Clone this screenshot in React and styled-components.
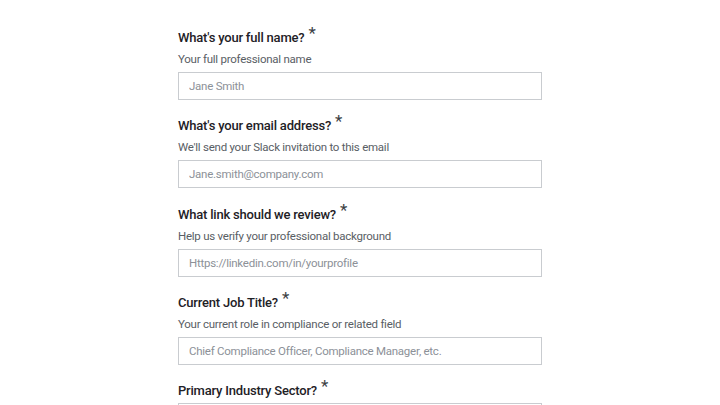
import React from 'react';
import styled, { createGlobalStyle } from 'styled-components';

const GlobalStyle = createGlobalStyle`
    html, body {
        margin: 0;
        padding: 0;
        background: #ffffff;
        font-family: Roboto, 'Noto Sans', sans-serif;
    }
`;

const Page = styled.div`
    width: 720px;
    height: 405px;
    overflow: hidden;
    padding: 28px 0 0 178px;
    box-sizing: border-box;
`;

const Form = styled.form`
    width: 364px;
    display: flex;
    flex-direction: column;
    gap: 16.3px;
`;

const Field = styled.div`
    display: flex;
    flex-direction: column;
`;

const Label = styled.label`
    font-size: 13px;
    line-height: 20px;
    font-weight: 500;
    color: #1e2126;
    letter-spacing: -0.2px;

    span {
        color: #3b3f45;
        font-size: 17px;
        font-weight: 400;
        margin-left: 4px;
        position: relative;
        top: -3px;
        line-height: 0;
    }
`;

const Hint = styled.p`
    margin: 1px 0 0;
    font-size: 11.5px;
    line-height: 20px;
    letter-spacing: -0.25px;
    color: #595e65;
`;

const Input = styled.input`
    margin-top: ${({ noHint }) => noHint ? '2px' : '3px'};
    height: 28px;
    box-sizing: border-box;
    border: 1px solid #c9ccd0;
    border-radius: 0;
    padding: 0 10px;
    font-family: inherit;
    font-size: 11.5px;
    letter-spacing: -0.25px;
    color: #1f2329;
    outline: none;

    &::placeholder {
        color: #8c9198;
    }
`;

const fields = [
    { label: "What's your full name?", hint: 'Your full professional name', placeholder: 'Jane Smith' },
    { label: "What's your email address?", hint: "We'll send your Slack invitation to this email", placeholder: 'Jane.smith@company.com' },
    { label: 'What link should we review?', hint: 'Help us verify your professional background', placeholder: 'Https://linkedin.com/in/yourprofile' },
    { label: 'Current Job Title?', hint: 'Your current role in compliance or related field', placeholder: 'Chief Compliance Officer, Compliance Manager, etc.' },
    { label: 'Primary Industry Sector?', hint: null, placeholder: '' },
];

const App = () => (
    <>
        <GlobalStyle />
        <Page>
            <Form>
                {fields.map((f) => (
                    <Field key={f.label}>
                        <Label>{f.label}<span>*</span></Label>
                        {f.hint && <Hint>{f.hint}</Hint>}
                        <Input noHint={!f.hint} placeholder={f.placeholder} />
                    </Field>
                ))}
            </Form>
        </Page>
    </>
);

export default App;
